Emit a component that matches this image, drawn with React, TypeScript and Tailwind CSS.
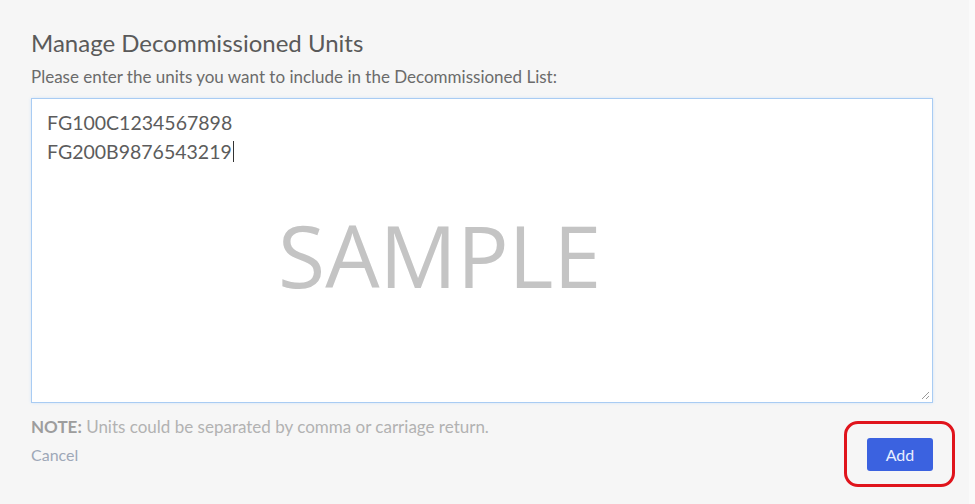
import * as React from 'react';

const lato = { fontFamily: 'Lato, "Open Sans", sans-serif' };

function ResizeGrip() {
  return (
    <svg className="absolute bottom-[2px] right-[2px]" width="10" height="10" viewBox="0 0 10 10">
      <path d="M9 2 L2 9 M9 6 L6 9" stroke="#9a9a9a" strokeWidth="1" fill="none" />
    </svg>
  );
}

export default function App() {
  const units = ['FG100C1234567898', 'FG200B9876543219'];

  return (
    <div className="flex h-[504px] w-[975px] bg-[#fafafa]" style={lato}>
      <div className="flex w-[969px] flex-col bg-[#f6f6f6] pl-[31px] pr-[36px] pt-[27px]">
        {/* Header */}
        <h1 className="text-[24px] leading-[32px] text-[#5a5a5a]">Manage Decommissioned Units</h1>
        <p className="mt-[7px] text-[17px] leading-[22px] text-[#6b6b6b]">
          Please enter the units you want to include in the Decommissioned List:
        </p>

        {/* Units box */}
        <div className="relative mt-[10px] h-[305px] w-[902px] border border-[#a9ccf3] bg-white px-[15px] pt-[9px] shadow-[0_0_3px_#d3e5fa]">
          {units.map((u, i) => (
            <div key={u} className="text-[19.5px] leading-[29px] text-[#5c5c5c]">
              {u}
              {i === units.length - 1 && (
                <span className="ml-[1px] inline-block h-[21px] w-[1px] translate-y-[3px] bg-[#333]" />
              )}
            </div>
          ))}
          <div
            className="pointer-events-none absolute left-[246px] top-[113px] text-[86px] leading-none text-[#c4c4c4]"
            style={{ fontFamily: '"Open Sans", Lato, sans-serif' }}
          >
            SAMPLE
          </div>
          <ResizeGrip />
        </div>

        {/* Footer */}
        <div className="flex w-[902px] items-start justify-between">
          <div className="flex flex-col">
            <p className="mt-[13px] text-[17px] leading-[22px] text-[#b2b2b2]">
              <span className="font-bold text-[#9d9d9d]">NOTE:</span> Units could be separated by comma or carriage return.
            </p>
            <a className="mt-[6px] text-[16px] leading-[22px] text-[#9ea8b8]">Cancel</a>
          </div>
          <div className="relative mt-[35px]">
            <div className="pointer-events-none absolute -bottom-[16px] -left-[23px] -right-[22px] -top-[17px] rounded-[14px] border-[3px] border-[#e0141c]" />
            <button className="h-[33px] w-[66px] rounded-[3px] bg-[#3b62e0] text-[16px] text-[#e8eeff]">Add</button>
          </div>
        </div>
      </div>
    </div>
  );
}
